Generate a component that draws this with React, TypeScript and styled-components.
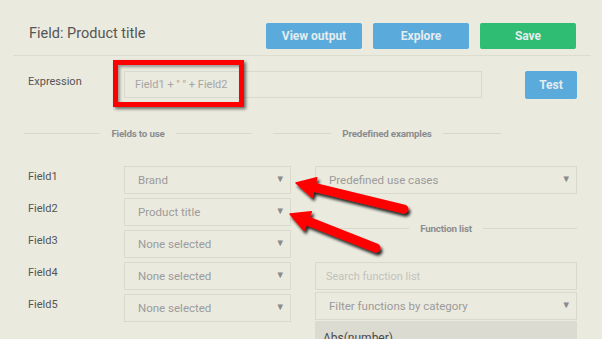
import React from "react";
import styled, { createGlobalStyle } from "styled-components";

const Global = createGlobalStyle`
  html, body { margin: 0; padding: 0; background: #ebeadf; }
  body { font-family: Roboto, "Liberation Sans", Arial, sans-serif; }
  * { box-sizing: border-box; }
`;

const Page = styled.div`
  position: relative;
  width: 602px;
  height: 339px;
  overflow: hidden;
  background: #ebeadf;
`;

const Header = styled.div`
  margin: 0 11px 0 13px;
  padding: 23px 15px 6px 16px;
  display: flex;
  align-items: flex-start;
  justify-content: space-between;
  border-bottom: 1px solid #dddcd1;
  height: 56px;
`;

const Title = styled.h1`
  margin: 1px 0 0;
  font-size: 14.5px;
  font-weight: 400;
  color: #555;
  line-height: 20px;
`;

const ButtonGroup = styled.div`
  display: flex;
  gap: 11px;
`;

const Button = styled.button<{ $variant?: "blue" | "green"; $w?: number; $h?: number }>`
  width: ${(p) => p.$w ?? 96}px;
  height: ${(p) => p.$h ?? 26}px;
  border: none;
  border-radius: 2px;
  background: ${(p) => (p.$variant === "green" ? "#2ebd73" : "#5aabdc")};
  color: #e4ecee;
  font-family: Roboto, "Liberation Sans", Arial, sans-serif;
  font-weight: 700;
  font-size: 12px;
  padding: 0;
  cursor: pointer;
`;

const Main = styled.div`
  padding: 0 25px 0 28px;
`;

const ExpressionRow = styled.div`
  margin-top: 15px;
  display: grid;
  grid-template-columns: 96px 358px 1fr 52px;
  align-items: start;
`;

const Label = styled.div`
  font-size: 11px;
  color: #555;
  padding-top: 4px;
  line-height: 14px;
`;

const TextInput = styled.div<{ $h?: number; $pad?: number; $color?: string }>`
  height: ${(p) => p.$h ?? 28}px;
  border: 1px solid #dad9ce;
  display: flex;
  align-items: center;
  padding-left: ${(p) => p.$pad ?? 10}px;
  font-size: 11px;
  color: ${(p) => p.$color ?? "#a5a5a5"};
`;

const SectionRow = styled.div`
  margin: 28px 0 0 -4px;
  display: grid;
  grid-template-columns: 228px 228px;
  gap: 21px;
`;

const Divider = styled.div<{ $mt?: number; $mb?: number }>`
  display: flex;
  align-items: center;
  height: 12px;
  margin: ${(p) => p.$mt ?? 0}px 0 ${(p) => p.$mb ?? 0}px;
  &::before, &::after {
    content: "";
    flex: 1;
    height: 1px;
    background: #d9d8cd;
  }
`;

const DividerText = styled.span`
  font-size: 9.8px;
  font-weight: 700;
  letter-spacing: -0.2px;
  color: #8a8d8f;
  margin: 0 11.5px;
  white-space: nowrap;
`;

const Body = styled.div`
  margin-top: 27px;
  display: grid;
  grid-template-columns: 263px 262px;
  gap: 24px;
`;

const Fields = styled.div`
  display: flex;
  flex-direction: column;
  gap: 4px;
`;

const FieldRow = styled.div`
  display: grid;
  grid-template-columns: 96px 167px;
`;

const Select = styled.div`
  height: 28px;
  border: 1px solid #dad9ce;
  display: flex;
  align-items: center;
  justify-content: space-between;
  padding: 0 5px 0 13px;
  font-size: 11.5px;
  color: #9b9b9b;
`;

const Caret = styled.span`
  font-size: 9.5px;
  color: #8a8a8a;
  margin-top: -4px;
`;

const RightCol = styled.div`
  display: flex;
  flex-direction: column;
`;

const Stack = styled.div`
  display: flex;
  flex-direction: column;
  gap: 2px;
`;

const ListItem = styled.div`
  margin-top: 1px;
  height: 30px;
  background: #dcdbd2;
  padding: 10px 0 0 8px;
  font-size: 12px;
  color: #4a4a4a;
`;

const Highlight = styled.div`
  position: absolute;
  left: 113px;
  top: 60px;
  width: 131px;
  height: 47px;
  border: 5px solid #ff0000;
  box-shadow: 2px 2px 3px rgba(0, 0, 0, 0.55), inset 2px 2px 3px rgba(0, 0, 0, 0.35);
  pointer-events: none;
`;

const Overlay = styled.svg`
  position: absolute;
  left: 0;
  top: 0;
  pointer-events: none;
`;

type Arrow = { tail: [number, number]; tip: [number, number] };

const arrows: Arrow[] = [
  { tail: [404, 209], tip: [296, 183] },
  { tail: [376, 248], tip: [290, 214] },
];

function arrowShapes(a: Arrow) {
  const [tx, ty] = a.tail;
  const [px, py] = a.tip;
  const dx = px - tx;
  const dy = py - ty;
  const len = Math.hypot(dx, dy);
  const ux = dx / len;
  const uy = dy / len;
  const headLen = 19;
  const half = 10;
  const bx = px - ux * headLen;
  const by = py - uy * headLen;
  const nx = -uy;
  const ny = ux;
  const head = `${px},${py} ${bx + nx * half},${by + ny * half} ${bx - nx * half},${by - ny * half}`;
  return { tx, ty, bx: bx + ux * 2, by: by + uy * 2, head };
}

function Arrows() {
  return (
    <Overlay width={602} height={339} viewBox="0 0 602 339">
      <defs>
        <filter id="sh" x="-20%" y="-20%" width="140%" height="160%">
          <feGaussianBlur in="SourceAlpha" stdDeviation="1.6" />
          <feOffset dx="1.5" dy="2.5" result="b" />
          <feComponentTransfer>
            <feFuncA type="linear" slope="0.85" />
          </feComponentTransfer>
          <feMerge>
            <feMergeNode />
            <feMergeNode in="SourceGraphic" />
          </feMerge>
        </filter>
      </defs>
      {arrows.map((a, i) => {
        const s = arrowShapes(a);
        return (
          <g key={i} filter="url(#sh)">
            <line x1={s.tx} y1={s.ty} x2={s.bx} y2={s.by} stroke="#ff0000" strokeWidth={9} strokeLinecap="round" />
            <polygon points={s.head} fill="#ff0000" strokeLinejoin="round" stroke="#ff0000" strokeWidth={1.5} />
          </g>
        );
      })}
    </Overlay>
  );
}

const fieldValues = ["Brand", "Product title", "None selected", "None selected", "None selected"];

export default function App() {
  return (
    <Page>
      <Global />
      <Header>
        <Title>Field: Product title</Title>
        <ButtonGroup>
          <Button>View output</Button>
          <Button>Explore</Button>
          <Button $variant="green">Save</Button>
        </ButtonGroup>
      </Header>
      <Main>
        <ExpressionRow>
          <Label>Expression</Label>
          <TextInput $h={27}>Field1 + " " + Field2</TextInput>
          <div />
          <Button $w={52} $h={28}>Test</Button>
        </ExpressionRow>
        <SectionRow>
          <Divider>
            <DividerText>Fields to use</DividerText>
          </Divider>
          <Divider>
            <DividerText>Predefined examples</DividerText>
          </Divider>
        </SectionRow>
        <Body>
          <Fields>
            {fieldValues.map((v, i) => (
              <FieldRow key={i}>
                <Label>Field{i + 1}</Label>
                <Select>
                  <span>{v}</span>
                  <Caret>▼</Caret>
                </Select>
              </FieldRow>
            ))}
          </Fields>
          <RightCol>
            <Select>
              <span>Predefined use cases</span>
              <Caret>▼</Caret>
            </Select>
            <Divider $mt={28} $mb={28}>
              <DividerText>Function list</DividerText>
            </Divider>
            <Stack>
              <TextInput $color="#c2c2bb">Search function list</TextInput>
              <Select>
                <span>Filter functions by category</span>
                <Caret>▼</Caret>
              </Select>
            </Stack>
            <ListItem>Abs(number)</ListItem>
          </RightCol>
        </Body>
      </Main>
      <Highlight />
      <Arrows />
    </Page>
  );
}
